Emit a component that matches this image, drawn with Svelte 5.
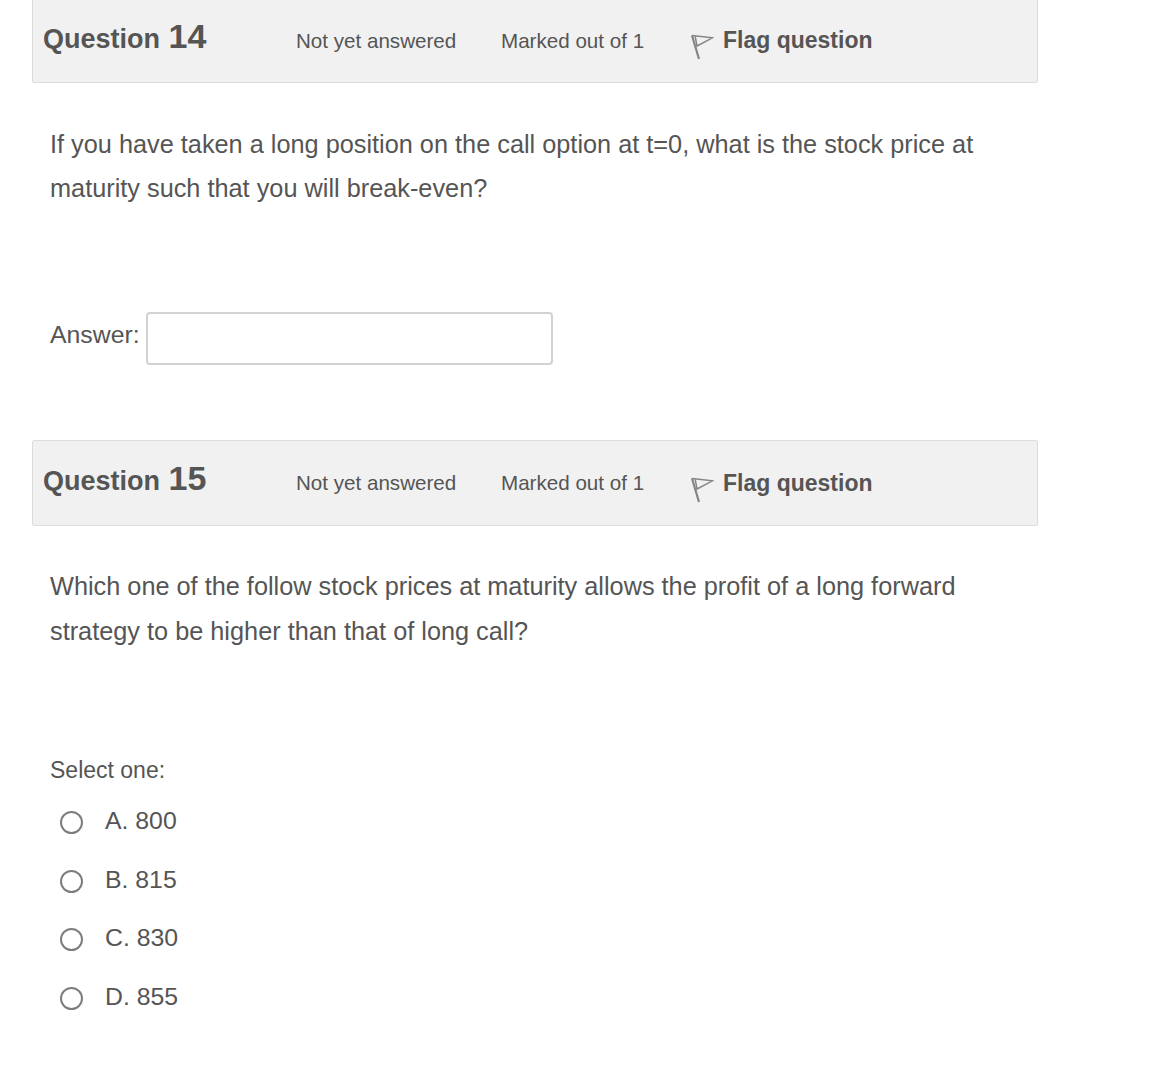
<script>
  const options = ['A. 800', 'B. 815', 'C. 830', 'D. 855'];
</script>

{#snippet head(n)}
  <header class="head">
    <h3 class="title">Question <span class="num">{n}</span></h3>
    <span class="meta state">Not yet answered</span>
    <span class="meta mark">Marked out of 1</span>
    <span class="flag">
      <svg width="24" height="26" viewBox="0 0 24 26" fill="none" aria-hidden="true">
        <path d="M2 1.5 L9 25" stroke="#858585" stroke-width="2.2"/>
        <path d="M2 1.5 L22.5 3.8 L7 12 L5.2 2.5" stroke="#858585" stroke-width="1.5" stroke-linejoin="miter"/>
      </svg>
      <b>Flag question</b>
    </span>
  </header>
{/snippet}

<main class="page">
  <section class="que first">
    {@render head(14)}
    <p class="q">If you have taken a long position on the call option at t=0, what is the stock price at maturity such that you will break-even?</p>
    <div class="answer">
      <label for="ans">Answer:</label>
      <input id="ans" type="text" />
    </div>
  </section>

  <section class="que second">
    {@render head(15)}
    <p class="q">Which one of the follow stock prices at maturity allows the profit of a long forward strategy to be higher than that of long call?</p>
    <div class="select">Select one:</div>
    <div class="opts">
      {#each options as o}
        <label class="opt"><span class="radio"></span><span>{o}</span></label>
      {/each}
    </div>
  </section>
</main>

<style>
  :global(body) { background: #fff; margin: 0; }
  .page {
    width: 1006px;
    margin: -3px 0 0 32px;
    font-family: "Liberation Sans", Arial, sans-serif;
    color: #555;
    height: 1068px;
    overflow: hidden;
  }
  .head {
    box-sizing: border-box;
    height: 86px;
    background: #f1f1f1;
    border: 1px solid #dcdcdc;
    border-radius: 2px;
    display: flex;
    align-items: center;
    padding-left: 10px;
  }
  .title {
    margin: 0;
    width: 253px;
    font-size: 27px;
    font-weight: 700;
    color: #555;
    white-space: nowrap;
    transform: translateY(-4px);
  }
  .num { font-size: 34px; margin-left: 1px; }
  .meta { font-size: 20.6px; white-space: nowrap; margin-top: 1px; }
  .state { width: 205px; }
  .mark { width: 190px; }
  .flag { display: flex; align-items: center; gap: 9px; }
  .flag svg { margin: 14px 0 0 -1px; }
  .flag b { font-size: 23px; white-space: nowrap; margin-top: 1px; }
  .q {
    margin: 0;
    padding: 39px 18px 0;
    font-size: 25.3px;
    line-height: 44.4px;
    width: 950px;
  }
  .answer {
    display: flex;
    align-items: center;
    gap: 6px;
    margin-top: 101px;
    padding-left: 18px;
    font-size: 24.8px;
  }
  .answer label { margin-top: -6px; }
  input {
    box-sizing: border-box;
    width: 407px;
    height: 53px;
    border: 2px solid #d2d2d2;
    border-radius: 4px;
    background: #fff;
    margin: 0;
  }
  .second { margin-top: 75px; }
  .second .q { padding-top: 38px; line-height: 45px; }
  .select { margin: 99px 0 0 18px; font-size: 23px; line-height: 34px; }
  .opts { display: flex; flex-direction: column; margin-top: 5.4px; }
  .opt {
    display: flex;
    align-items: center;
    height: 58.5px;
    padding-left: 28px;
    font-size: 24.8px;
    gap: 22px;
  }
  .radio {
    box-sizing: border-box;
    width: 23px;
    height: 23px;
    border: 2px solid #7d7d7d;
    border-radius: 50%;
    background: #fff;
    margin-top: 3px;
  }
</style>
